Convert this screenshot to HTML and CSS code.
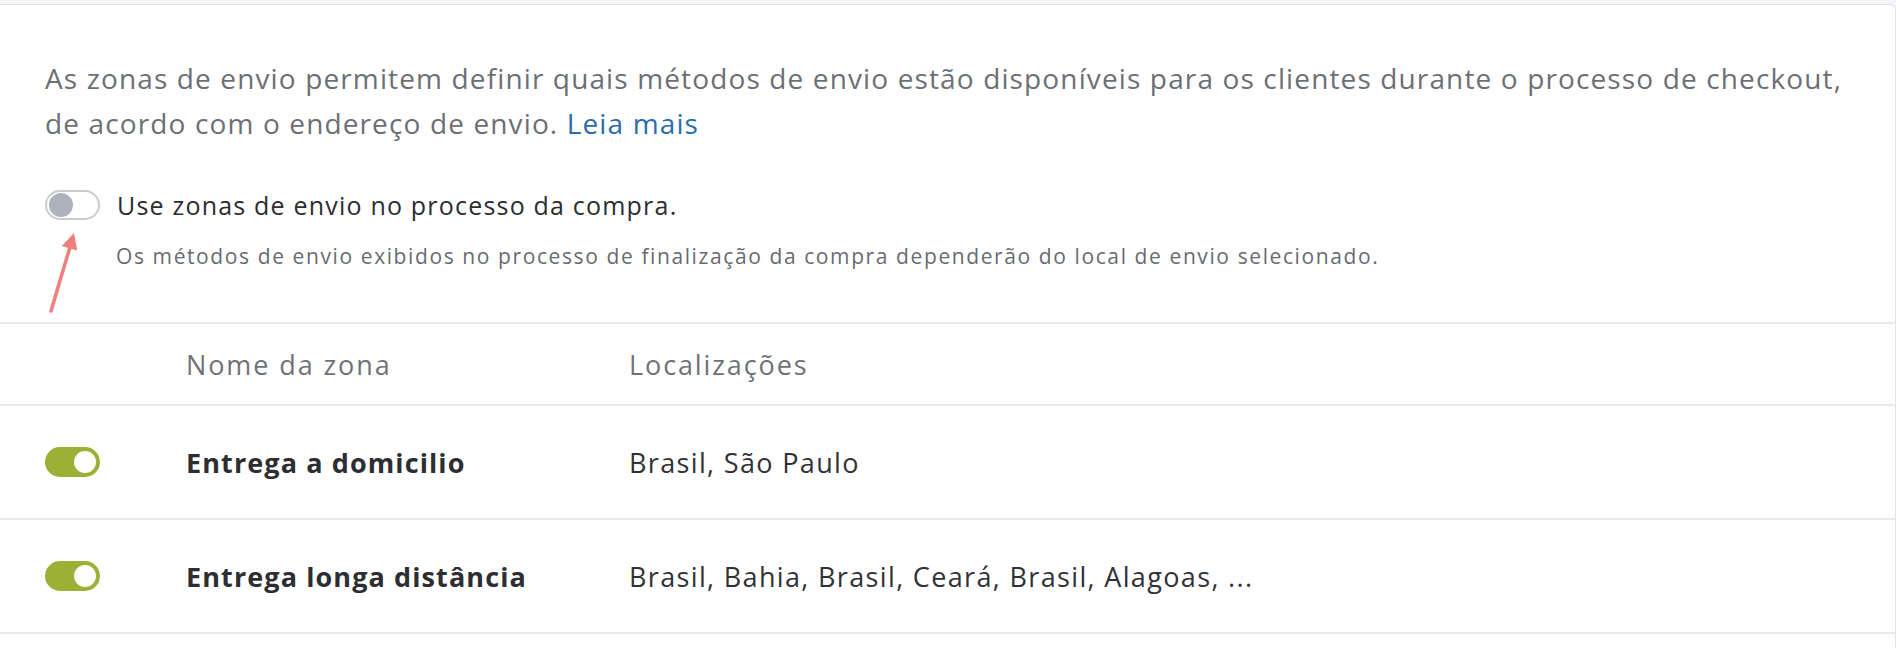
FILE: index.html
```html
<!DOCTYPE html>
<html lang="pt-BR">
<head>
<meta charset="utf-8">
<title>Zonas de envio</title>
<link rel="stylesheet" href="styles.css">
</head>
<body>
<div class="card">
  <section class="intro">
    <p class="lead">As zonas de envio permitem definir quais métodos de envio estão disponíveis para os clientes durante o processo de checkout,<br>de acordo com o endereço de envio. <a href="#" class="link">Leia mais</a></p>
    <div class="option">
      <span class="switch switch-off"><span class="knob"></span></span>
      <span class="option-label">Use zonas de envio no processo da compra.</span>
    </div>
    <p class="hint">Os métodos de envio exibidos no processo de finalização da compra dependerão do local de envio selecionado.</p>
    <svg class="arrow" width="40" height="86" viewBox="0 0 40 86">
      <line x1="8" y1="80" x2="27" y2="16" stroke="#ef7f7a" stroke-width="3.5" stroke-linecap="round"/>
      <polygon points="31,2 18.8,15 34.2,19.6" fill="#ef7f7a"/>
    </svg>
  </section>
  <div class="table">
    <div class="row head">
      <div class="cell c-toggle"></div>
      <div class="cell c-name">Nome da zona</div>
      <div class="cell c-loc">Localizações</div>
    </div>
    <div class="row">
      <div class="cell c-toggle"><span class="switch switch-on"><span class="knob"></span></span></div>
      <div class="cell c-name strong">Entrega a domicilio</div>
      <div class="cell c-loc">Brasil, São Paulo</div>
    </div>
    <div class="row">
      <div class="cell c-toggle"><span class="switch switch-on"><span class="knob"></span></span></div>
      <div class="cell c-name strong">Entrega longa distância</div>
      <div class="cell c-loc">Brasil, Bahia, Brasil, Ceará, Brasil, Alagoas, ...</div>
    </div>
  </div>
</div>
</body>
</html>
```

FILE: styles.css
```css
* { box-sizing: border-box; }
html, body { margin: 0; padding: 0; }
body {
  background: #f5f6f8;
  font-family: "Open Sans", Lato, sans-serif;
}
.card {
  margin-top: 4px;
  background: #fff;
  border-top: 1px solid #e3e4e7;
  border-right: 1px solid #e3e4e7;
  border-top-right-radius: 6px;
  min-height: 644px;
}
.intro {
  position: relative;
  padding: 51px 45px 52px 45px;
}
.lead {
  margin: 0;
  font-size: 28px;
  line-height: 45px;
  letter-spacing: 1.13px;
  color: #6b6f76;
}
.link { color: #2b6cad; text-decoration: none; }
.option {
  display: flex;
  align-items: center;
  gap: 17px;
  margin-top: 44px;
}
.option-label {
  font-size: 25px;
  line-height: 30px;
  letter-spacing: 1.2px;
  color: #2b2d31;
}
.hint {
  margin: 22px 0 0 71px;
  font-size: 21px;
  line-height: 28px;
  letter-spacing: 1.6px;
  color: #676b71;
}
.switch {
  display: inline-flex;
  align-items: center;
  width: 55px;
  height: 30px;
  border-radius: 15px;
  flex: none;
}
.switch-off {
  border: 2px solid #c8cbd0;
  background: #fff;
  padding-left: 2px;
}
.switch-off .knob {
  width: 24px;
  height: 24px;
  border-radius: 50%;
  background: #adb3bd;
}
.switch-on {
  background: #9bb035;
  justify-content: flex-end;
  padding-right: 4px;
}
.switch-on .knob {
  width: 22px;
  height: 22px;
  border-radius: 50%;
  background: #fff;
}
.arrow {
  position: absolute;
  left: 43px;
  top: 226px;
}
.table {
  border-top: 2px solid #e8e9eb;
}
.row {
  display: grid;
  grid-template-columns: 186px 443px 1fr;
  align-items: center;
  height: 114px;
  border-bottom: 2px solid #e8e9eb;
  font-size: 27px;
  letter-spacing: 1.35px;
  color: #303236;
}
.row.head {
  height: 82px;
  color: #6e7278;
  letter-spacing: 1.9px;
}
.c-toggle {
  padding-left: 45px;
  display: flex;
  align-items: center;
}
.strong { font-weight: 700; color: #2c2e31; letter-spacing: 1.1px; }
```
